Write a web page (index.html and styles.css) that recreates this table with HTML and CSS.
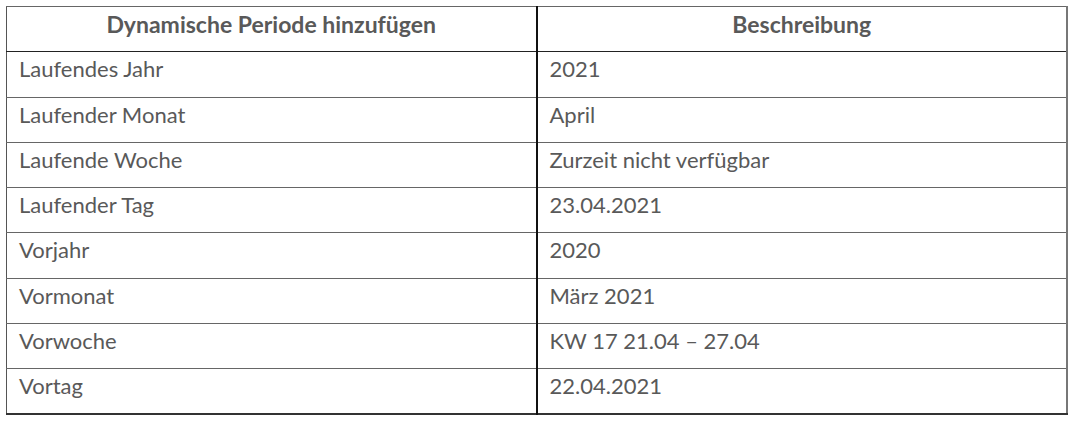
FILE: index.html
```html
<!DOCTYPE html>
<html lang="de">
<head>
<meta charset="utf-8">
<title>Dynamische Perioden</title>
<link rel="stylesheet" href="styles.css">
</head>
<body>
<table class="periods">
  <thead>
    <tr><th>Dynamische Periode hinzufügen</th><th>Beschreibung</th></tr>
  </thead>
  <tbody>
    <tr><td>Laufendes Jahr</td><td>2021</td></tr>
    <tr><td>Laufender Monat</td><td>April</td></tr>
    <tr><td>Laufende Woche</td><td>Zurzeit nicht verfügbar</td></tr>
    <tr><td>Laufender Tag</td><td>23.04.2021</td></tr>
    <tr><td>Vorjahr</td><td>2020</td></tr>
    <tr><td>Vormonat</td><td>März 2021</td></tr>
    <tr><td>Vorwoche</td><td>KW 17 21.04 – 27.04</td></tr>
    <tr><td>Vortag</td><td>22.04.2021</td></tr>
  </tbody>
</table>
</body>
</html>
```
FILE: styles.css
```css
html, body {
  margin: 0;
  padding: 0;
  background: #ffffff;
}
body {
  padding: 6px 0 0 6px;
  font-family: Lato, "Open Sans", sans-serif;
  color: #595959;
}
.periods {
  border-collapse: collapse;
  width: 1062px;
  table-layout: fixed;
  border-left: 1px solid #555;
  border-right: 2px solid #777;
  border-top: 1px solid #777;
  border-bottom: 2px solid #333;
}
.periods th,
.periods td {
  height: 45.3px;
  box-sizing: border-box;
  padding: 4px 12px 0;
  vertical-align: top;
  font-size: 22px;
  line-height: 26px;
  text-align: left;
  border-top: 1px solid #666;
  border-bottom: 1px solid #666;
}
.periods th:first-child,
.periods td:first-child {
  width: 530px;
  border-right: 2px solid #111;
}
.periods th {
  text-align: center;
  font-size: 23px;
  font-weight: 700;
  padding-top: 4px;
  border-bottom: 1px solid #222;
}
```
